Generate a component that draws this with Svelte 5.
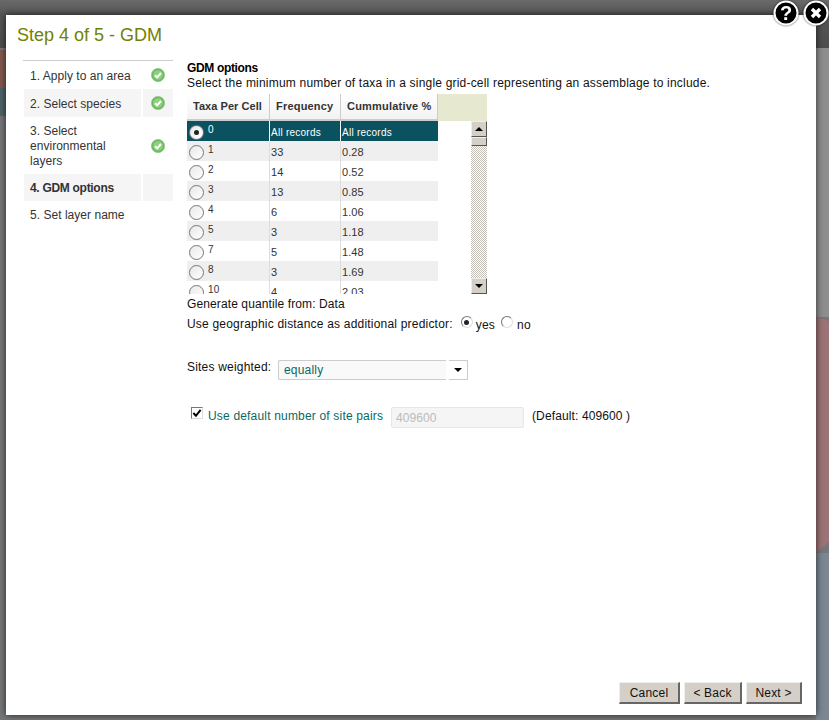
<script>
  const steps = [
    { label: '1. Apply to an area', done: true },
    { label: '2. Select species', done: true, alt: true },
    { label: '3. Select environmental layers', done: true, tall: true },
    { label: '4. GDM options', alt: true, current: true },
    { label: '5. Set layer name' }
  ];
  const rows = [
    ['0', 'All records', 'All records'],
    ['1', '33', '0.28'],
    ['2', '14', '0.52'],
    ['3', '13', '0.85'],
    ['4', '6', '1.06'],
    ['5', '3', '1.18'],
    ['7', '5', '1.48'],
    ['8', '3', '1.69'],
    ['10', '4', '2.03']
  ];
</script>

<div class="page">
  <div class="backdrop">
    <div class="top"></div>
    <div class="band red"></div>
    <div class="band teal"></div>
    <div class="side-upper"></div>
    <svg class="map" width="13" height="240" viewBox="0 0 13 240">
      <polygon points="0,0 13,4 13,225 0,236" fill="#9c7476" />
    </svg>
    <div class="side-lower"></div>
  </div>

  <div class="modal">
    <h1>Step 4 of 5 - GDM</h1>
    <div class="columns">
      <ul class="steps">
        {#each steps as s}
          <li class:alt={s.alt} class:tall={s.tall} class:current={s.current}>
            <span class="name">{s.label}</span>
            <span class="state">
              {#if s.done}
                <svg width="14" height="14" viewBox="0 0 14 14">
                  <circle cx="7" cy="7" r="6.6" fill="#6cb862" stroke="#8ecb85" stroke-width=".8" />
                  <circle cx="7" cy="7" r="4.8" fill="#8fd07f" />
                  <path d="M4 7.2 6.2 9.3 10 5" fill="none" stroke="#fff" stroke-width="2" />
                </svg>
              {/if}
            </span>
          </li>
        {/each}
      </ul>

      <div class="content">
        <div class="heading">GDM options</div>
        <div class="desc">Select the minimum number of taxa in a single grid-cell representing an assemblage to include.</div>

        <div class="grid">
          <div class="head">
            <div class="c1">Taxa Per Cell</div>
            <div class="c2">Frequency</div>
            <div class="c3">Cummulative %</div>
            <div class="filler"></div>
          </div>
          <div class="body">
            <div class="rows">
              {#each rows as r, i}
                <div class="row" class:sel={i === 0} class:odd={i % 2 === 1}>
                  <div class="c1 taxa">
                    <span class="radio big" class:on={i === 0}></span>
                    <span class="num">{r[0]}</span>
                  </div>
                  <div class="c2 val">{r[1]}</div>
                  <div class="c3 val">{r[2]}</div>
                </div>
              {/each}
            </div>
            <div class="scrollbar">
              <div class="sb-btn"><i class="up"></i></div>
              <div class="sb-thumb"></div>
              <div class="sb-track"></div>
              <div class="sb-btn"><i class="down"></i></div>
            </div>
          </div>
        </div>

        <div class="line quant">Generate quantile from: Data</div>
        <div class="line geo">
          <span>Use geographic distance as additional predictor:</span>
          <span class="radio small on"></span><span class="opt">yes</span>
          <span class="radio small no"></span><span class="opt opt-no">no</span>
        </div>

        <div class="sites">
          <span class="sites-label">Sites weighted:</span>
          <div class="combo"><span>equally</span></div>
          <div class="combo-btn"><i class="down"></i></div>
        </div>

        <div class="pairs">
          <span class="check">
            <svg width="11" height="11" viewBox="0 0 11 11"><path d="M1.5 5 4.3 8 9.5 1.5" fill="none" stroke="#000" stroke-width="2.2" /></svg>
          </span>
          <span class="pairs-label">Use default number of site pairs</span>
          <div class="disabled-input">409600</div>
          <span class="default">(Default: 409600 )</span>
        </div>
      </div>
    </div>

    <div class="actions">
      <button class="cancel">Cancel</button>
      <button class="back">&lt; Back</button>
      <button class="next">Next &gt;</button>
    </div>
  </div>

  <div class="round help">
    <svg width="26" height="26" viewBox="0 0 26 26">
      <circle cx="13" cy="13" r="11.5" fill="#000" stroke="#fff" stroke-width="2" />
      <text x="13" y="20" text-anchor="middle" class="q">?</text>
    </svg>
  </div>
  <div class="round close">
    <svg width="26" height="26" viewBox="0 0 26 26">
      <circle cx="13" cy="13" r="11.5" fill="#000" stroke="#fff" stroke-width="2" />
      <path d="M9 9 17 17M17 9 9 17" stroke="#fff" stroke-width="3.4" />
    </svg>
  </div>
</div>

<style>
  :global(body) { margin: 0; }
  .page {
    position: relative;
    width: 829px;
    height: 720px;
    overflow: hidden;
    background: #757779;
    box-sizing: border-box;
    padding: 15px 13px 5px 6px;
    font-family: "Liberation Sans", Arial, sans-serif;
    font-size: 12px;
    letter-spacing: 0.2px;
    color: #222;
  }
  .backdrop { position: absolute; inset: 0; }
  .top { position: absolute; left: 0; right: 0; top: 0; height: 48px; background: linear-gradient(#6a6a6a, #565656 30%, #4e4e4e); }
  .band { position: absolute; left: 0; width: 6px; }
  .red { top: 50px; height: 38px; background: #85594f; }
  .teal { top: 88px; height: 28px; background: #4f6467; }
  .side-upper { position: absolute; left: 816px; top: 48px; width: 13px; height: 269px; background: #8e8e8e; }
  .map { position: absolute; left: 816px; top: 317px; }
  .side-lower { position: absolute; left: 816px; top: 553px; width: 13px; height: 167px; background: #7c8792; }
  .modal {
    position: relative;
    box-sizing: border-box;
    height: 700px;
    background: #fff;
    box-shadow: 0 0 7px rgba(0, 0, 0, .7);
    padding: 10px 14px 11px 10px;
    display: flex;
    flex-direction: column;
  }
  h1 {
    margin: 0 0 14px 1px;
    font-size: 18px;
    font-weight: normal;
    line-height: 21px;
    letter-spacing: 0;
    color: #718200;
  }
  .columns { flex: 1; display: flex; padding-left: 7px; }
  .steps {
    list-style: none;
    margin: 0;
    padding: 0;
    width: 150px;
    border-top: 1px solid #ccc;
    letter-spacing: 0.03px;
  }
  .steps li { display: flex; height: 28px; align-items: stretch; box-sizing: border-box; }
  .steps li.tall { height: 57px; }
  .steps li.alt { background: #f5f5f5; margin-left: 1px; }
  .steps li.current { font-weight: bold; letter-spacing: -0.3px; height: 27px; }
  .name { box-sizing: border-box; width: 120px; padding: 2px 0 0 7px; display: flex; align-items: center; line-height: 15px; color: #333; }
  .steps li.tall .name { padding-right: 30px; }
  .steps li:last-child .name { padding-top: 0; }
  .steps li.alt .name { border-right: 2px solid #fff; width: 119px; padding-left: 6px; }
  .state { flex: 1; display: flex; align-items: center; justify-content: center; }
  .content { margin-left: 14px; flex: 1; }
  .heading { font-weight: bold; letter-spacing: -0.35px; color: #000; line-height: 14px; margin-top: 1px; }
  .desc { line-height: 15px; color: #111; margin: 1px 0 3px; }
  .grid { width: 300px; }
  .head { display: flex; height: 27px; }
  .head > div {
    box-sizing: border-box;
    font-weight: bold;
    font-size: 11px;
    letter-spacing: 0.2px;
    line-height: 24px;
    padding-left: 6px;
    color: #333;
    background: linear-gradient(#fff, #f2f2f2);
    border-bottom: 2px solid #ccc;
    border-right: 1px solid #ccc;
  }
  .head > .c1 { letter-spacing: 0.05px; }
  .c1 { width: 83px; }
  .c2 { width: 71px; }
  .c3 { width: 97px; }
  .head .filler { width: 49px; background: #e6e8d0; border-right: 0; border-bottom-color: #e6e8d0; }
  .body { display: flex; height: 173px; overflow: hidden; }
  .rows { width: 284px; }
  .row { display: flex; width: 251px; height: 20px; box-sizing: border-box; font-size: 11px; color: #333; }
  .row > div { box-sizing: border-box; border-right: 1px solid #ddd; }
  .row .c3 { border-right: 0; }
  .row.odd { background: #efefef; }
  .row.sel { background: #0a525f; color: #fff; }
  .row.sel > div { border-right-color: #fff; }
  .taxa { display: flex; align-items: flex-start; padding: 4px 0 0 2px; }
  .num { margin-left: 4px; font-size: 10px; line-height: 11px; margin-top: -1px; }
  .val { padding-left: 1px; line-height: 23px; letter-spacing: 0.1px; }
  .sel .val { font-size: 10px; letter-spacing: 0.25px; }
  .radio {
    display: inline-block;
    box-sizing: border-box;
    border-radius: 50%;
    background: #fff;
    position: relative;
    flex: none;
  }
  .radio.big { width: 15px; height: 15px; border: 1px solid #777; background: linear-gradient(135deg, #e8e8e8, #fff); }
  .radio.small { width: 12px; height: 12px; border: 1px solid #999; border-color: #777 #ddd #ddd #777; }
  .radio.on::after {
    content: "";
    position: absolute;
    left: 50%;
    top: 50%;
    width: 5px;
    height: 5px;
    margin: -2.5px 0 0 -2.5px;
    border-radius: 50%;
    background: #222;
  }
  .scrollbar { width: 16px; display: flex; flex-direction: column; }
  .sb-btn, .sb-thumb {
    box-sizing: border-box;
    background: #d4d0c8;
    border: 1px solid;
    border-color: #eee #555 #555 #eee;
    display: flex;
    align-items: center;
    justify-content: center;
  }
  .sb-btn { height: 16px; }
  .sb-thumb { height: 9px; }
  .sb-track {
    flex: 1;
    background: repeating-conic-gradient(#c4c0b8 0 25%, #fff 0 50%) 0 0 / 2px 2px;
  }
  .up, .down { display: block; width: 0; height: 0; border-left: 4px solid transparent; border-right: 4px solid transparent; }
  .up { border-bottom: 4px solid #000; }
  .down { border-top: 4px solid #000; }
  .line { line-height: 15px; color: #111; }
  .quant { margin-top: 3px; letter-spacing: 0.11px; }
  .geo { display: flex; align-items: flex-start; margin-top: 5px; height: 20px; }
  .geo .on { margin-left: 8px; margin-top: -1px; }
  .geo .no { margin-left: 6px; margin-top: -1px; }
  .opt { margin: 1px 0 0 3px; }
  .opt-no { margin-left: 4px; }
  .sites { display: flex; align-items: flex-start; margin-top: 23px; height: 20px; }
  .sites-label { width: 91px; line-height: 15px; color: #111; }
  .combo {
    width: 168px;
    height: 20px;
    box-sizing: border-box;
    border: 1px solid #ccc;
    border-right: 0;
    border-radius: 2px 0 0 2px;
    background: #f9f9f9;
    color: #0a6a60;
    line-height: 18px;
    padding-left: 5px;
  }
  .combo-btn {
    width: 19px;
    height: 20px;
    margin-left: 3px;
    box-sizing: border-box;
    border: 1px solid #ccc;
    border-left: 0;
    display: flex;
    align-items: center;
    justify-content: center;
  }
  .pairs { display: flex; align-items: flex-start; margin-top: 27px; padding-left: 4px; }
  .check {
    width: 12px;
    height: 12px;
    box-sizing: border-box;
    border: 1px solid;
    border-color: #777 #ddd #ddd #777;
    background: #fff;
    display: flex;
    flex: none;
  }
  .pairs-label { color: #0a6a60; margin-left: 5px; width: 183px; line-height: 18px; flex: none; letter-spacing: 0.18px; }
  .disabled-input {
    width: 133px;
    height: 21px;
    box-sizing: border-box;
    border: 1px solid #e6e6e6;
    background: #f5f5f5;
    color: #bbb;
    line-height: 21px;
    letter-spacing: 0.1px;
    padding-left: 4px;
    border-radius: 2px;
    flex: none;
  }
  .default { margin-left: 8px; line-height: 18px; color: #111; letter-spacing: 0.12px; }
  .actions { display: flex; justify-content: flex-end; gap: 4px; }
  button {
    height: 22px;
    padding: 1px 0 0;
    box-sizing: border-box;
    background: #d4d0c8;
    border: 1px solid;
    border-width: 1px 2px 2px 1px;
    border-color: #eee #666 #666 #eee;
    font: inherit;
    letter-spacing: 0.2px;
    color: #111;
  }
  .cancel { width: 61px; }
  .back { width: 58px; }
  .next { width: 56px; }
  .round { position: absolute; top: 0; width: 26px; height: 26px; filter: drop-shadow(0 0 1px rgba(0,0,0,.7)); }
  .help { left: 773px; }
  .close { left: 803px; }
  .q { font-family: "Liberation Sans", sans-serif; font-weight: bold; font-size: 20px; fill: #fff; letter-spacing: 0; }
</style>
